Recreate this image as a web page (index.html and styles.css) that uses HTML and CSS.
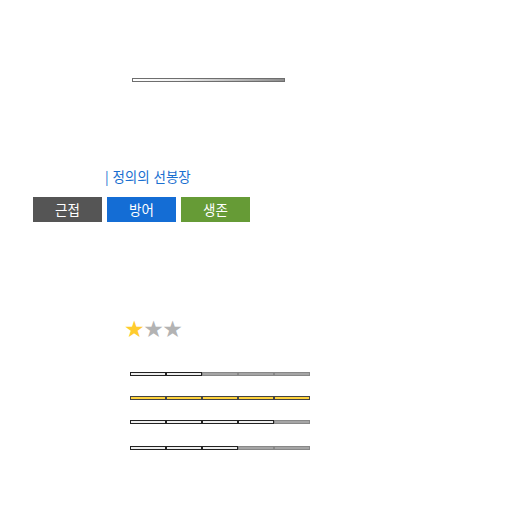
FILE: index.html
```html
<!DOCTYPE html>
<html lang="ko">
<head>
<meta charset="utf-8">
<link rel="stylesheet" href="styles.css">
</head>
<body>
<div class="page">
  <div class="hp-bar"><div class="hp-fill"></div></div>
  <div class="title">| 정의의 선봉장</div>
  <div class="tags">
    <span class="tag tag-melee">근접</span>
    <span class="tag tag-def">방어</span>
    <span class="tag tag-surv">생존</span>
  </div>
  <div class="stars"><span class="star on">★</span><span class="star">★</span><span class="star">★</span></div>
  <div class="stats">
    <div class="stat"><span class="seg on"></span><span class="seg on"></span><span class="seg"></span><span class="seg"></span><span class="seg"></span></div>
    <div class="stat gold"><span class="seg on"></span><span class="seg on"></span><span class="seg on"></span><span class="seg on"></span><span class="seg on"></span></div>
    <div class="stat"><span class="seg on"></span><span class="seg on"></span><span class="seg on"></span><span class="seg on"></span><span class="seg"></span></div>
    <div class="stat last"><span class="seg on"></span><span class="seg on"></span><span class="seg on"></span><span class="seg"></span><span class="seg"></span></div>
  </div>
</div>
</body>
</html>
```

FILE: styles.css
```css
html, body { margin: 0; padding: 0; background: #fff; }
body { font-family: "Noto Sans CJK KR", "Noto Sans", sans-serif; }
.page { width: 512px; height: 512px; overflow: hidden; }
.hp-bar {
  margin: 78px 0 0 132px;
  width: 153px;
  height: 4px;
  box-sizing: border-box;
  border: 1px solid #6e6e6e;
  background: #8a8a8a;
}
.hp-fill {
  height: 100%;
  background: linear-gradient(to right, #ffffff, #f0f0f0 30%, #b8b8b8 70%, #8c8c8c);
}
.title {
  margin: 85px 0 0 105px;
  font-size: 13.5px;
  font-weight: 400;
  line-height: 18px;
  color: #1a6fd0;
}
.tags {
  display: flex;
  gap: 5px;
  margin: 12px 0 0 33px;
}
.tag {
  width: 69px;
  height: 25px;
  line-height: 25px;
  text-align: center;
  color: #fff;
  font-size: 13.5px;
}
.tag-melee { background: #555555; }
.tag-def { background: #146dd5; }
.tag-surv { background: #669b36; }
.stars {
  margin: 94px 0 0 124px;
  font-size: 23px;
  line-height: 26px;
  font-family: "DejaVu Sans", sans-serif;
  color: #b3b3b3;
  letter-spacing: -1.5px;
}
.star.on { color: #ffcc2e; }
.stats {
  margin: 30px 0 0 130px;
  display: flex;
  flex-direction: column;
  gap: 20px;
}
.stat { display: flex; width: 180px; height: 4px; }
.stat.last { margin-top: 2px; }
.seg {
  flex: 1;
  box-sizing: border-box;
  border: 1px solid #888;
  background: #a5a5a5;
}
.seg.on { border-color: #222; background: #eeeeee; }
.stat.gold .seg.on { border-color: #444; background: #ffd33c; }
```
